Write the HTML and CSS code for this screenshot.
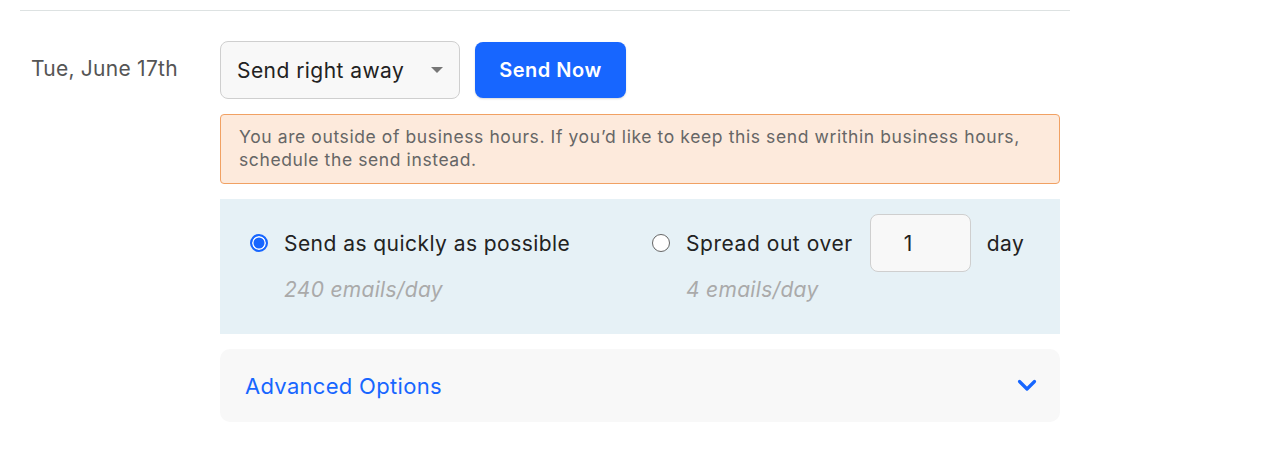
FILE: index.html
```html
<!DOCTYPE html>
<html>
<head>
<meta charset="utf-8">
<link rel="stylesheet" href="styles.css">
</head>
<body>
<div class="page">
  <hr class="divider">
  <div class="row">
    <div class="date">Tue, June 17th</div>
    <div class="content">
      <div class="actions">
        <div class="select">
          <span>Send right away</span>
          <span class="caret"></span>
        </div>
        <button class="send-btn">Send Now</button>
      </div>
      <div class="warning">You are outside of business hours. If you’d like to keep this send writhin business hours, schedule the send instead.</div>
      <div class="options">
        <div class="option opt-quick">
          <div class="opt-line">
            <span class="radio checked"></span>
            <span class="opt-label">Send as quickly as possible</span>
          </div>
          <div class="opt-sub">240 emails/day</div>
        </div>
        <div class="option opt-spread">
          <div class="opt-line">
            <span class="radio"></span>
            <span class="opt-label">Spread out over</span>
            <div class="num-input">1</div>
            <span class="opt-label">day</span>
          </div>
          <div class="opt-sub">4 emails/day</div>
        </div>
      </div>
      <div class="advanced">
        <span>Advanced Options</span>
        <svg class="chevron" width="20" height="13" viewBox="0 0 20 13"><path d="M2.5 2.5 L10 10 L17.5 2.5" fill="none" stroke="#1766ff" stroke-width="3.2" stroke-linecap="round" stroke-linejoin="round"/></svg>
      </div>
    </div>
  </div>
</div>
</body>
</html>
```

FILE: styles.css
```css
* { box-sizing: border-box; }
html, body { margin: 0; padding: 0; background: #fff; }
body {
  font-family: Inter, "Open Sans", "Liberation Sans", sans-serif;
  color: #222;
  letter-spacing: 0.45px;
}
.page { width: 1070px; padding-left: 20px; padding-top: 10px; }
.divider { border: 0; border-top: 1px solid #dde2e2; margin: 0; width: 1050px; }
.row { display: flex; padding-top: 30px; }
.date {
  width: 200px;
  padding-left: 11px;
  padding-top: 15px;
  font-size: 21px;
  letter-spacing: 0.25px;
  color: #555;
}
.content { width: 840px; }
.actions { display: flex; gap: 15px; align-items: center; }
.select {
  width: 240px; height: 58px;
  background: #f8f8f8;
  border: 1px solid #cfcfcf;
  border-radius: 8px;
  display: flex; align-items: center; justify-content: space-between;
  padding: 0 16px 0 16px;
  font-size: 21px;
  color: #222;
}
.caret {
  width: 0; height: 0;
  border-left: 6px solid transparent;
  border-right: 6px solid transparent;
  border-top: 6px solid #777;
}
.send-btn {
  width: 151px; height: 56px;
  background: #1766ff;
  color: #fff;
  border: 0;
  border-radius: 8px;
  font-family: inherit;
  font-size: 20px;
  letter-spacing: 0.5px;
  font-weight: 600;
  box-shadow: 0 1px 2px rgba(0,0,0,0.15);
}
.warning {
  margin-top: 15px;
  height: 70px;
  background: #fdeadc;
  border: 1px solid #f1a163;
  border-radius: 4px;
  padding: 10px 18px;
  font-size: 17.5px;
  letter-spacing: 0.6px;
  line-height: 23px;
  color: #666;
}
.options {
  margin-top: 15px;
  height: 135px;
  background: #e6f1f6;
  display: flex;
  padding: 15px 0 0 30px;
}
.option { display: flex; flex-direction: column; }
.opt-quick { width: 402px; }
.opt-line { display: flex; align-items: center; height: 58px; }
.radio {
  width: 18px; height: 18px;
  border-radius: 50%;
  border: 1.5px solid #666;
  background: #fff;
  margin-right: 16px;
  flex: none;
}
.radio.checked {
  background: #1766ff;
  border: 2px solid #1766ff;
  box-shadow: inset 0 0 0 1.5px #fff;
}
.opt-label { font-size: 21px; color: #222; }
.opt-spread .opt-label { letter-spacing: 0.55px; }
.num-input {
  width: 101px; height: 58px;
  margin: 0 16px 0 17px;
  background: #f8f8f8;
  border: 1px solid #cfcfcf;
  border-radius: 8px;
  font-size: 21px;
  display: flex; align-items: center;
  padding-left: 33px;
}
.opt-sub {
  padding-left: 34px;
  margin-top: 5px;
  font-size: 21px;
  letter-spacing: 0.3px;
  font-style: italic;
  color: #aaa;
}
.advanced {
  margin-top: 15px;
  height: 73px;
  background: #f8f8f8;
  border-radius: 10px;
  display: flex; align-items: center; justify-content: space-between;
  padding: 0 23px 0 25px;
  font-size: 22px;
  letter-spacing: 0.3px;
  color: #1766ff;
}
.chevron { display: block; }
```
